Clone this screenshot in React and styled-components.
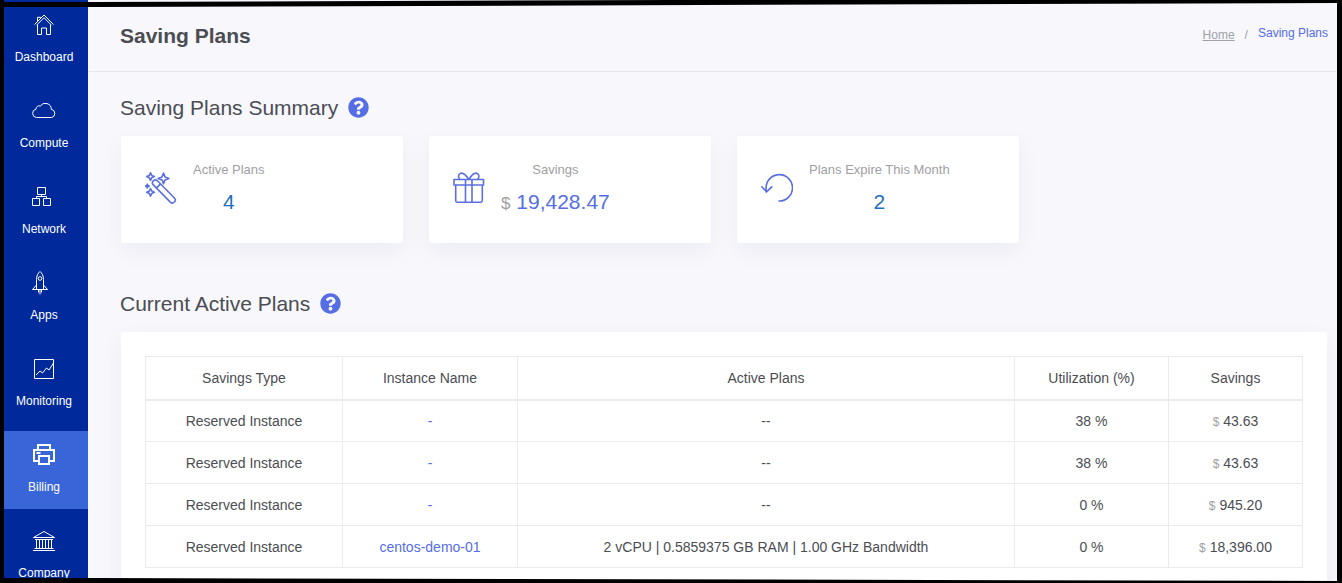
import React from "react";
import styled, { createGlobalStyle, css } from "styled-components";
import { FaQuestionCircle } from "react-icons/fa";

const GlobalStyle = createGlobalStyle`
  *, *::before, *::after { box-sizing: border-box; }
  body {
    margin: 0;
    background: #f7f7fc;
    color: #4b4d52;
    font-family: "Liberation Sans", Arial, sans-serif;
    font-size: 14px;
    line-height: 20px;
  }
  a { color: #556ee6; text-decoration: none; }
`;

const Frame = styled.div`
  position: relative;
  display: flex;
  height: 100vh;
  overflow: hidden;
  border: 0 solid #000;
  border-width: 0 5px 0 4px;
`;

const TopEdge = styled.div`
  position: absolute;
  inset: 0 -5px auto -4px;
  height: 7px;
  background: #000;
  clip-path: polygon(0 2px, 7% 2px, 50% 0, 100% 0, 100% 3px, 7% 7px, 0 7px);
`;

const BottomEdge = styled.div`
  position: absolute;
  inset: auto -5px 0 -4px;
  height: 5px;
  background: #000;
  clip-path: polygon(0 0, 7% 0, 100% 3px, 100% 100%, 0 100%);
`;

const Sidebar = styled.nav`
  flex: 0 0 84px;
  background: #002a9c;
`;

const NavList = styled.ul`
  display: flex;
  flex-direction: column;
  gap: 8px;
  margin: 0;
  padding: 1px 0 0;
  list-style: none;
`;

const NavLink = styled.a`
  display: flex;
  flex-direction: column;
  align-items: center;
  gap: 12px;
  padding: 12px 4px 14px 0;
  color: #fff;
  font-size: 12px;
  line-height: 16px;
  ${(p) => p.$active && css`background: #3865d8;`}
`;

const NavIcon = styled.svg`
  display: block;
  width: 24px;
  height: 24px;
  fill: none;
  stroke: #fff;
  stroke-width: ${(p) => (p.$bold ? 2 : 1)};
`;

const Main = styled.main`
  flex: 1;
  min-width: 0;
`;

const PageHeader = styled.header`
  display: flex;
  align-items: center;
  justify-content: space-between;
  min-height: 72px;
  padding: 0 9px 0 32px;
  border-bottom: 1px solid #e9e9ee;
`;

const PageTitle = styled.h1`
  margin: 0;
  font-size: 21px;
  line-height: 24px;
`;

const Breadcrumb = styled.ol`
  display: flex;
  align-items: flex-start;
  gap: 10px;
  margin: 0;
  padding: 0 0 2px;
  list-style: none;
  color: #a0a1a7;
  font-size: 12px;
  line-height: 22px;
`;

const HomeLink = styled.a`
  color: #a0a1a7;
  text-decoration: underline;
`;

const CurrentCrumb = styled.li`
  color: #556ee6;
  line-height: 18px;
`;

const Content = styled.div`
  display: flex;
  flex-direction: column;
  gap: 45px;
  padding: 20px 10px 24px 32px;
`;

const SectionHeader = styled.div`
  display: flex;
  align-items: center;
  gap: 10px;
  margin-bottom: 12px;
`;

const SectionTitle = styled.h2`
  margin: 0;
  font-size: 21px;
  font-weight: 400;
  line-height: 32px;
`;

const HelpButton = styled.button`
  display: flex;
  padding: 0 0 1px;
  border: 0;
  background: none;
  color: #556ee6;
  font-size: 21px;
  cursor: pointer;
`;

const surface = css`
  padding: 24px;
  border-radius: 3px;
  background: #fff;
  box-shadow: 0 8px 24px rgba(18, 38, 63, 0.05);
`;

const CardGrid = styled.div`
  display: grid;
  grid-template-columns: repeat(4, 1fr);
  gap: 26px;
  margin-left: 1px;
`;

const Card = styled.article`
  ${surface}
  display: flex;
  align-items: center;
  gap: 16px;
`;

const CardIcon = styled.svg`
  flex: none;
  width: 32px;
  height: 32px;
  margin-bottom: 3px;
  fill: none;
  stroke: #5b6fe0;
  stroke-width: 1.6;
  stroke-linejoin: round;
  stroke-linecap: round;
`;

const CardText = styled.div`
  text-align: center;
  white-space: nowrap;
`;

const CardLabel = styled.div`
  margin-bottom: 4px;
  color: #a0a0a3;
  font-size: 13px;
  line-height: 20px;
`;

const CardValue = styled.div`
  color: ${(p) => (p.$money ? "#556ee6" : "#1f70bd")};
  font-size: 21px;
  line-height: 35px;
`;

const Currency = styled.span`
  color: #a0a0a0;
  font-size: ${(p) => (p.$large ? 17 : 12)}px;
  line-height: 1;
`;

const Panel = styled.div`
  ${surface}
  margin-left: 1px;
`;

const Table = styled.table`
  width: 100%;
  table-layout: fixed;
  border-collapse: collapse;
  text-align: center;
`;

const Col = styled.col`
  width: ${(p) => p.$width};
`;

const HeadCell = styled.th`
  height: 43px;
  padding: 0;
  border: 1px solid #eaebee;
  border-bottom-width: 2px;
  font-weight: 400;
`;

const Cell = styled.td`
  height: 42px;
  padding: 0;
  border: 1px solid #eaebee;
`;

const NAV_ICONS = {
  home: (
    <>
      <path d="M2.500 11.500 12 2l9.500 9.500" />
      <path d="M4.500 12.200 12 4.700l7.500 7.500" />
      <path d="M5.500 11.500v10h4v-6.500h5v6.500h4v-10M5.500 8.300v-4h3v1" />
    </>
  ),
  cloud: (
    <path d="M4.500 18.500a4.200 4.200 0 0 1-.5-8.300 3.200 3.200 0 0 1 4.300-3.200 6 6 0 0 1 11 3.300 4.200 4.200 0 0 1 .4 8.200z" />
  ),
  network: (
    <>
      <path d="M5.500 2.500h8v7h-8zM.500 13.500h7v7h-7zM11.500 13.500h7v7h-7z" />
      <path d="M9.500 9.500v2M4.500 13.500v-2h10v2" />
    </>
  ),
  rocket: (
    <>
      <path d="M4.500 18.500v-10c0-3.500 1.500-6.500 3.500-8 2 1.500 3.500 4.500 3.500 8v10" />
      <circle cx="8" cy="7.500" r="1.800" />
      <path d="M4.500 14 .500 18.500h15L11.500 14M6.500 19v2.500M8 19v4.500M9.500 19v2.500" />
    </>
  ),
  chart: (
    <>
      <path d="M2.500 2.500h19v19h-19z" />
      <path d="m4 18 4-4 2.500 2 4-5 2.500 2 4.500-7" />
    </>
  ),
  printer: (
    <>
      <path d="M6 7V2h12v5M6 18H2V7h20v11h-4" />
      <path d="M7 13h10v8H7zM4.500 10h4" />
    </>
  ),
  bank: (
    <>
      <path d="M1.500 8.500 12 2.500l10.500 6zM1 21.500h22M2.500 19.500h19M3 10.500h18" />
      <path d="M4.500 10.500v9M7.500 10.500v9M10.500 10.500v9M13.500 10.500v9M16.500 10.500v9M19.500 10.500v9" />
    </>
  ),
};

const CARD_ICONS = {
  wand: (
    <>
      <path d="M8.300 12.900a2.900 2.900 0 0 1 4.100-4.100l17 17.200a2.900 2.900 0 0 1-4.100 4.100zM11.500 15.900l4-4" />
      <path d="M5.500.800 6.700 3.400 9.300 4.600 6.700 5.800 5.500 8.400 4.300 5.800 1.700 4.600 4.300 3.400z" />
      <path d="M18.500 1 20 4.900l3.900 1.500L20 7.900l-1.500 3.900L17 7.900l-3.900-1.500L17 4.900z" />
      <path d="m5.500 16.500 1.200 2.600 2.600 1.200-2.600 1.200-1.200 2.600-1.200-2.600-2.600-1.200 2.600-1.200z" />
      <path d="m2.300 12.200.6 1.300 1.300.6-1.300.6-.6 1.300-.6-1.300-1.300-.6 1.300-.6z" />
    </>
  ),
  gift: (
    <>
      <path d="M1 7.500h29.500v5.500H1zM2.700 13v15.500a1.800 1.800 0 0 0 1.800 1.800h23a1.800 1.800 0 0 0 1.800-1.800V13M12.500 7.500v22.800M19 7.500v22.800" />
      <path d="M15.800 7.500C13 3 10.500.500 7.800 1.200 5 2 5 5.500 7 7.500M15.800 7.500C18.500 3 21 .500 23.800 1.200c2.700.8 2.700 4.300.7 6.300" />
    </>
  ),
  undo: (
    <path d="M18 29a13.200 13.200 0 1 0-12.900-13.200V20M.800 14.800l4.800 5 5.200-5" />
  ),
};

const NAV_ITEMS = [
  { label: "Dashboard", icon: "home" },
  { label: "Compute", icon: "cloud" },
  { label: "Network", icon: "network" },
  { label: "Apps", icon: "rocket" },
  { label: "Monitoring", icon: "chart" },
  { label: "Billing", icon: "printer", active: true },
  { label: "Company", icon: "bank" },
];

const SUMMARY = [
  { label: "Active Plans", value: "4", icon: "wand" },
  { label: "Savings", value: "19,428.47", icon: "gift", money: true },
  { label: "Plans Expire This Month", value: "2", icon: "undo" },
];

const COLUMNS = [
  { label: "Savings Type", width: "197px" },
  { label: "Instance Name", width: "175px" },
  { label: "Active Plans", width: "auto" },
  { label: "Utilization (%)", width: "154px" },
  { label: "Savings", width: "134px" },
];

const PLANS = [
  { name: "-", plan: "--", use: "38 %", savings: "43.63" },
  { name: "-", plan: "--", use: "38 %", savings: "43.63" },
  { name: "-", plan: "--", use: "0 %", savings: "945.20" },
  {
    name: "centos-demo-01",
    plan: "2 vCPU | 0.5859375 GB RAM | 1.00 GHz Bandwidth",
    use: "0 %",
    savings: "18,396.00",
  },
];

function SectionHeading({ children }) {
  return (
    <SectionHeader>
      <SectionTitle>{children}</SectionTitle>
      <HelpButton type="button" aria-label={`Help: ${children}`}>
        <FaQuestionCircle />
      </HelpButton>
    </SectionHeader>
  );
}

export default function App() {
  return (
    <>
      <GlobalStyle />
      <Frame>
        <Sidebar>
          <NavList>
            {NAV_ITEMS.map((item) => (
              <li key={item.label}>
                <NavLink href="#" $active={item.active}>
                  <NavIcon viewBox="0 0 24 24" aria-hidden="true" $bold={item.active}>
                    {NAV_ICONS[item.icon]}
                  </NavIcon>
                  {item.label}
                </NavLink>
              </li>
            ))}
          </NavList>
        </Sidebar>
        <Main>
          <PageHeader>
            <PageTitle>Saving Plans</PageTitle>
            <nav aria-label="Breadcrumb">
              <Breadcrumb>
                <li><HomeLink href="#">Home</HomeLink></li>
                <li aria-hidden="true">/</li>
                <CurrentCrumb aria-current="page">Saving Plans</CurrentCrumb>
              </Breadcrumb>
            </nav>
          </PageHeader>
          <Content>
            <section>
              <SectionHeading>Saving Plans Summary</SectionHeading>
              <CardGrid>
                {SUMMARY.map((card) => (
                  <Card key={card.label}>
                    <CardIcon viewBox="0 0 32 32" aria-hidden="true">
                      {CARD_ICONS[card.icon]}
                    </CardIcon>
                    <CardText>
                      <CardLabel>{card.label}</CardLabel>
                      <CardValue $money={card.money}>
                        {card.money && <><Currency $large>$</Currency>{" "}</>}
                        {card.value}
                      </CardValue>
                    </CardText>
                  </Card>
                ))}
              </CardGrid>
            </section>
            <section>
              <SectionHeading>Current Active Plans</SectionHeading>
              <Panel>
                <Table>
                  <colgroup>
                    {COLUMNS.map((c) => <Col key={c.label} $width={c.width} />)}
                  </colgroup>
                  <thead>
                    <tr>
                      {COLUMNS.map((c) => (
                        <HeadCell key={c.label} scope="col">{c.label}</HeadCell>
                      ))}
                    </tr>
                  </thead>
                  <tbody>
                    {PLANS.map((row, i) => (
                      <tr key={i}>
                        <Cell>Reserved Instance</Cell>
                        <Cell><a href="#">{row.name}</a></Cell>
                        <Cell>{row.plan}</Cell>
                        <Cell>{row.use}</Cell>
                        <Cell><Currency>$</Currency> {row.savings}</Cell>
                      </tr>
                    ))}
                  </tbody>
                </Table>
              </Panel>
            </section>
          </Content>
        </Main>
        <TopEdge />
        <BottomEdge />
      </Frame>
    </>
  );
}
